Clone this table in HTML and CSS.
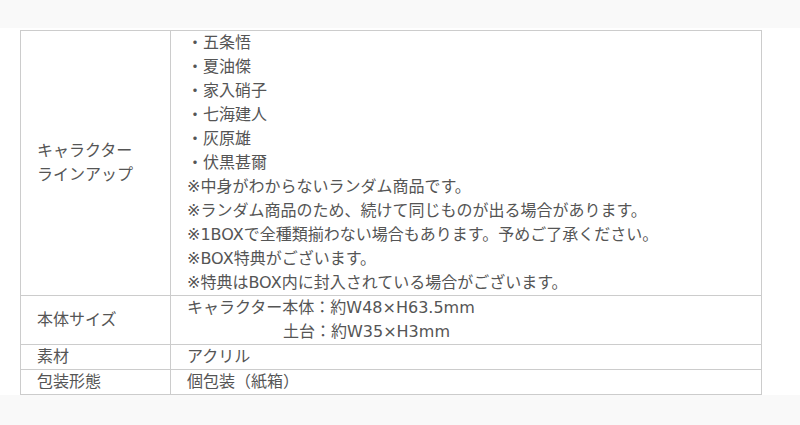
FILE: index.html
```html
<!DOCTYPE html>
<html lang="ja">
<head>
    <meta charset="utf-8">
    <title>商品仕様</title>
    <link rel="stylesheet" href="styles.css">
</head>
<body>
    <div class="spec">
        <table class="spec-table">
            <tr>
                <th>キャラクター<br>ラインアップ</th>
                <td>
                    ・五条悟<br>
                    ・夏油傑<br>
                    ・家入硝子<br>
                    ・七海建人<br>
                    ・灰原雄<br>
                    ・伏黒甚爾<br>
                    ※中身がわからないランダム商品です。<br>
                    ※ランダム商品のため、続けて同じものが出る場合があります。<br>
                    ※1BOXで全種類揃わない場合もあります。予めご了承ください。<br>
                    ※BOX特典がございます。<br>
                    ※特典はBOX内に封入されている場合がございます。
                </td>
            </tr>
            <tr>
                <th>本体サイズ</th>
                <td>キャラクター本体：約W48×H63.5mm<br>　　　　　　土台：約W35×H3mm</td>
            </tr>
            <tr>
                <th>素材</th>
                <td>アクリル</td>
            </tr>
            <tr>
                <th>包装形態</th>
                <td>個包装（紙箱）</td>
            </tr>
        </table>
    </div>
</body>
</html>
```

FILE: styles.css
```css
html, body {
    background: #f9f9f9;
    margin: 0px;
    padding: 0px;
}

body {
    color: #555;
    font-family: "DejaVu Sans", "Noto Sans CJK JP", sans-serif;
    font-size: 16px;
}

.spec {
    background: #fff;
    margin-top: 28px;
    padding: 2px 0px 0px 20px;
    height: 365px;
}

.spec-table {
    border-collapse: collapse;
    table-layout: fixed;
    width: 742px;
}

.spec-table th,
.spec-table td {
    border: 1px solid #ccc;
    line-height: 24px;
    padding: 0px 16px;
    text-align: left;
    vertical-align: middle;
    font-weight: normal;
}

.spec-table th { width: 117px; }

.spec-table td { white-space: nowrap; }
```
